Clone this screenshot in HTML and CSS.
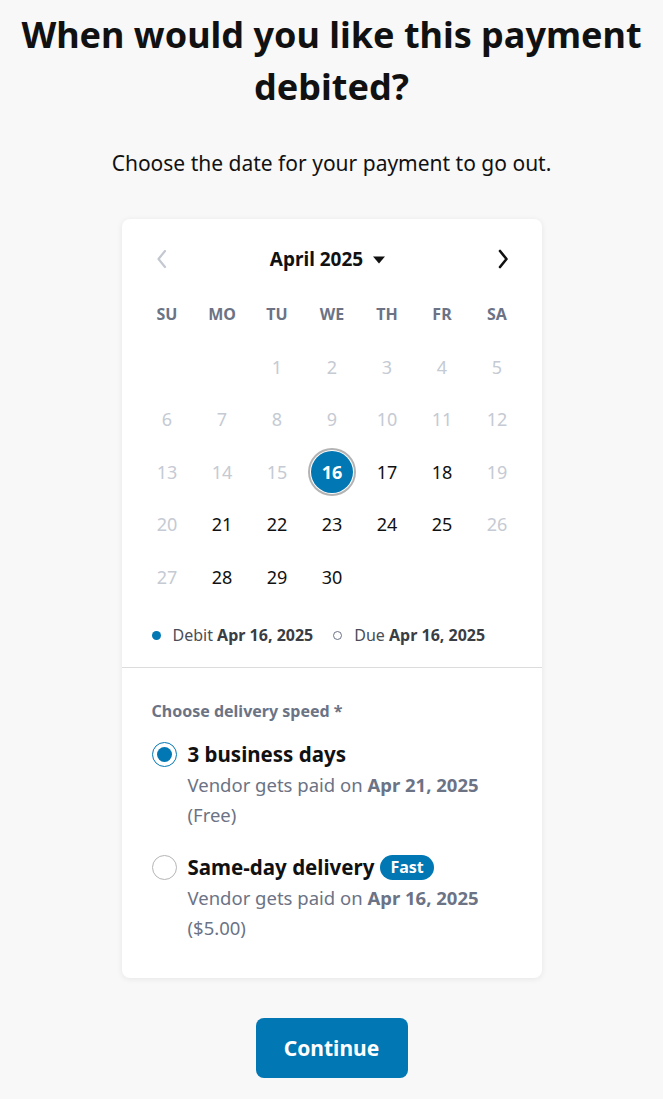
FILE: index.html
```html
<!DOCTYPE html>
<html lang="en">
<head>
<meta charset="utf-8">
<title>Payment date</title>
<link rel="stylesheet" href="styles.css">
</head>
<body>
<main class="page">
  <h1 class="title">When would you like this payment debited?</h1>
  <p class="subtitle">Choose the date for your payment to go out.</p>

  <section class="card">
    <div class="cal">
      <div class="cal-nav">
        <button class="nav-btn prev" aria-label="Previous month">
          <svg width="12" height="20" viewBox="0 0 12 20"><path d="M9 2 L2.5 10 L9 18" fill="none" stroke="currentColor" stroke-width="2.2" stroke-linecap="round" stroke-linejoin="round"/></svg>
        </button>
        <div class="month">April 2025
          <svg class="caret" width="14" height="8" viewBox="0 0 14 8"><path d="M1 0.5 H13 L7 7.5 Z" fill="currentColor"/></svg>
        </div>
        <button class="nav-btn next" aria-label="Next month">
          <svg width="12" height="20" viewBox="0 0 12 20"><path d="M3 2 L9.5 10 L3 18" fill="none" stroke="currentColor" stroke-width="2.6" stroke-linecap="round" stroke-linejoin="round"/></svg>
        </button>
      </div>
      <div class="grid">
        <div class="dow">SU</div><div class="dow">MO</div><div class="dow">TU</div><div class="dow">WE</div><div class="dow">TH</div><div class="dow">FR</div><div class="dow">SA</div>

        <div class="day"></div><div class="day"></div><div class="day off">1</div><div class="day off">2</div><div class="day off">3</div><div class="day off">4</div><div class="day off">5</div>
        <div class="day off">6</div><div class="day off">7</div><div class="day off">8</div><div class="day off">9</div><div class="day off">10</div><div class="day off">11</div><div class="day off">12</div>
        <div class="day off">13</div><div class="day off">14</div><div class="day off">15</div><div class="day"><span class="sel">16</span></div><div class="day">17</div><div class="day">18</div><div class="day off">19</div>
        <div class="day off">20</div><div class="day">21</div><div class="day">22</div><div class="day">23</div><div class="day">24</div><div class="day">25</div><div class="day off">26</div>
        <div class="day off">27</div><div class="day">28</div><div class="day">29</div><div class="day">30</div><div class="day"></div><div class="day"></div><div class="day"></div>
      </div>
      <div class="legend">
        <span class="leg"><span class="dot filled"></span>Debit <b>Apr 16, 2025</b></span>
        <span class="leg"><span class="dot hollow"></span>Due <b>Apr 16, 2025</b></span>
      </div>
    </div>

    <div class="speed">
      <div class="speed-label">Choose delivery speed *</div>
      <div class="option">
        <span class="radio checked"></span>
        <div class="opt-body">
          <div class="opt-title">3 business days</div>
          <div class="opt-sub">Vendor gets paid on <b>Apr 21, 2025</b><br>(Free)</div>
        </div>
      </div>
      <div class="option second">
        <span class="radio"></span>
        <div class="opt-body">
          <div class="opt-title">Same-day delivery <span class="badge">Fast</span></div>
          <div class="opt-sub">Vendor gets paid on <b>Apr 16, 2025</b><br>($5.00)</div>
        </div>
      </div>
    </div>
  </section>

  <button class="continue">Continue</button>
</main>
</body>
</html>
```

FILE: styles.css
```css
* { box-sizing: border-box; }
html, body { margin: 0; padding: 0; }
body {
  background: #f8f8f8;
  font-family: "Noto Sans", "Open Sans", "Liberation Sans", sans-serif;
  color: #111;
}
.page {
  display: flex;
  flex-direction: column;
  align-items: center;
  padding-top: 9px;
}
.title {
  margin: 0;
  padding: 0 16px;
  font-size: 36px;
  line-height: 52px;
  font-weight: 700;
  text-align: center;
  color: #111;
}
.subtitle {
  margin: 36px 0 0;
  font-size: 21px;
  line-height: 28px;
  color: #111;
}
.card {
  margin-top: 42px;
  width: 420px;
  background: #fff;
  border-radius: 8px;
  box-shadow: 0 1px 6px rgba(0,0,0,0.08);
}
.cal {
  padding: 20px 17px 20px 18px;
  border-bottom: 1px solid #dcdcdc;
}
.cal-nav {
  height: 40px;
  display: flex;
  align-items: center;
  justify-content: space-between;
  padding: 0 10px 0 10px;
  margin-bottom: 9px;
}
.nav-btn {
  border: 0;
  background: none;
  padding: 0;
  width: 24px;
  height: 24px;
  display: flex;
  align-items: center;
  justify-content: center;
  cursor: pointer;
}
.prev { color: #c3c8d1; }
.next { color: #111; }
.month {
  display: flex;
  align-items: center;
  gap: 9px;
  font-size: 19px;
  font-weight: 700;
  color: #111;
  margin-right: 8px;
}
.caret { color: #111; margin-top: 1px; }
.grid {
  display: grid;
  grid-template-columns: repeat(7, 55px);
  grid-auto-rows: 52.5px;
}
.dow, .day {
  display: flex;
  align-items: center;
  justify-content: center;
}
.dow {
  font-size: 16px;
  font-weight: 700;
  color: #6b7385;
}
.day {
  font-size: 18px;
  color: #111;
}
.day.off { color: #c5cad3; }
.sel {
  width: 42px;
  height: 42px;
  border-radius: 50%;
  background: #0177b3;
  color: #fff;
  font-weight: 700;
  display: flex;
  align-items: center;
  justify-content: center;
  box-shadow: 0 0 0 1px #fff, 0 0 0 3px #b3b3b3;
}
.legend {
  margin-top: 20px;
  height: 24px;
  display: flex;
  align-items: center;
  gap: 20px;
  padding-left: 12px;
  font-size: 16px;
  color: #4a4d55;
}
.leg { display: flex; align-items: center; white-space: pre; }
.leg b { font-weight: 700; color: #3a3d44; }
.dot {
  width: 9px;
  height: 9px;
  border-radius: 50%;
  margin-right: 12px;
}
.dot.filled { background: #0177b3; }
.dot.hollow { border: 1.5px solid #6b7385; }
.speed {
  padding: 31px 30px 35px;
}
.speed-label {
  font-size: 16px;
  line-height: 24px;
  font-weight: 700;
  color: #6b7385;
}
.option {
  display: flex;
  gap: 11px;
  margin-top: 16px;
}
.option.second { margin-top: 22px; }
.radio {
  flex: none;
  width: 25px;
  height: 25px;
  border-radius: 50%;
  border: 1px solid #b5b5b5;
  margin-top: 3px;
  position: relative;
}
.radio.checked {
  border: 1.5px solid #0177b3;
}
.radio.checked::after {
  content: "";
  position: absolute;
  inset: 4px;
  border-radius: 50%;
  background: #0177b3;
}
.opt-title {
  font-size: 20.5px;
  line-height: 30px;
  font-weight: 700;
  color: #111;
  display: flex;
  align-items: center;
  gap: 6px;
}
.opt-sub {
  margin-top: 1px;
  font-size: 18.5px;
  line-height: 30px;
  color: #6b7385;
}
.opt-sub b { font-weight: 700; }
.badge {
  display: inline-flex;
  align-items: center;
  height: 25px;
  padding: 0 10px;
  border-radius: 13px;
  background: #0177b3;
  color: #fff;
  font-size: 16px;
  font-weight: 700;
}
.continue {
  margin-top: 40px;
  width: 152px;
  height: 60px;
  border: 0;
  border-radius: 8px;
  background: #0177b3;
  color: #fff;
  font-family: inherit;
  font-size: 21px;
  font-weight: 700;
  cursor: pointer;
}
```
